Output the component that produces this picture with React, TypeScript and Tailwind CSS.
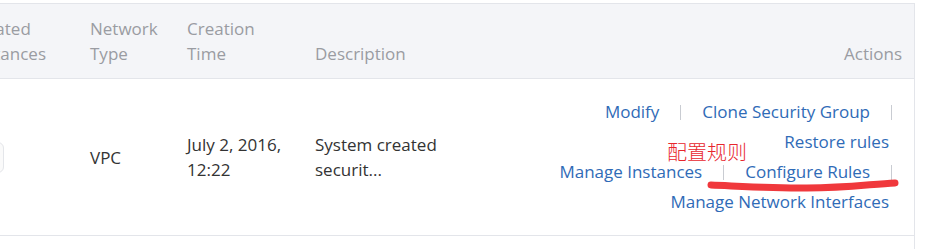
import React from "react";

const Sep = () => <span className="mx-[21px] inline-block h-[15px] w-px bg-[#c9ccd2]" />;

const Link = ({ text }: { text: string }) => (
  <a className="cursor-pointer whitespace-nowrap text-[#2f6bb7] hover:underline">{text}</a>
);

const App = () => {
  return (
    <div
      className="relative h-[249px] w-[931px] overflow-hidden bg-white text-[17px]"
      style={{ fontFamily: '"Open Sans", "Noto Sans CJK SC", sans-serif' }}
    >
      <div className="mt-[3px] h-[246px] w-[915px] overflow-hidden border-r border-t border-[#e3e5ea]">
        {/* header */}
        <div className="-ml-[29px] flex h-[75px] items-end border-b border-[#e3e5ea] bg-[#f4f5f8] pb-[12px] leading-[25px] text-[#9a9ca2]">
          <div className="w-[119px] shrink-0">
            Related
            <br />
            Instances
          </div>
          <div className="w-[97px] shrink-0">
            Network
            <br />
            Type
          </div>
          <div className="w-[128px] shrink-0">
            Creation
            <br />
            Time
          </div>
          <div className="w-[160px] shrink-0">Description</div>
          <div className="flex-1 pr-[12px] text-right">Actions</div>
        </div>

        {/* row */}
        <div className="-ml-[29px] flex h-[157px] items-center border-b border-[#e3e5ea] leading-[25px] text-[#333]">
          <div className="w-[119px] shrink-0">
            <div className="h-[31px] w-[33px] rounded-md border border-[#e4e6ea] bg-[#fafafa]" />
          </div>
          <div className="w-[97px] shrink-0">VPC</div>
          <div className="w-[128px] shrink-0">
            July 2, 2016,
            <br />
            12:22
          </div>
          <div className="w-[160px] shrink-0">
            System created
            <br />
            securit...
          </div>
          <div className="relative flex flex-1 flex-col items-end leading-[30px]">
            <div className="flex items-center pr-[1px]">
              <Link text="Modify" />
              <Sep />
              <Link text="Clone Security Group" />
              <Sep />
            </div>
            <div className="flex items-center pr-[25px]">
              <Link text="Restore rules" />
            </div>
            <div className="flex items-center pr-[1px]">
              <Link text="Manage Instances" />
              <Sep />
              <Link text="Configure Rules" />
              <Sep />
            </div>
            <div className="flex items-center pr-[25px]">
              <Link text="Manage Network Interfaces" />
            </div>

            {/* annotation */}
            <span
              className="absolute left-[192px] top-[43px] text-[20px] leading-[24px] text-[#e8262d]"
              style={{ fontFamily: '"Noto Sans CJK SC", sans-serif', fontWeight: 300 }}
            >
              配置规则
            </span>
            <svg className="absolute left-[232px] top-[77px]" width="196" height="20" viewBox="0 0 196 20">
              <path
                d="M4 11 C 30 12, 60 14, 100 14 S 165 10, 188 9"
                fill="none"
                stroke="#f0383c"
                strokeWidth="7"
                strokeLinecap="round"
              />
            </svg>
          </div>
        </div>
      </div>
    </div>
  );
};

export default App;
